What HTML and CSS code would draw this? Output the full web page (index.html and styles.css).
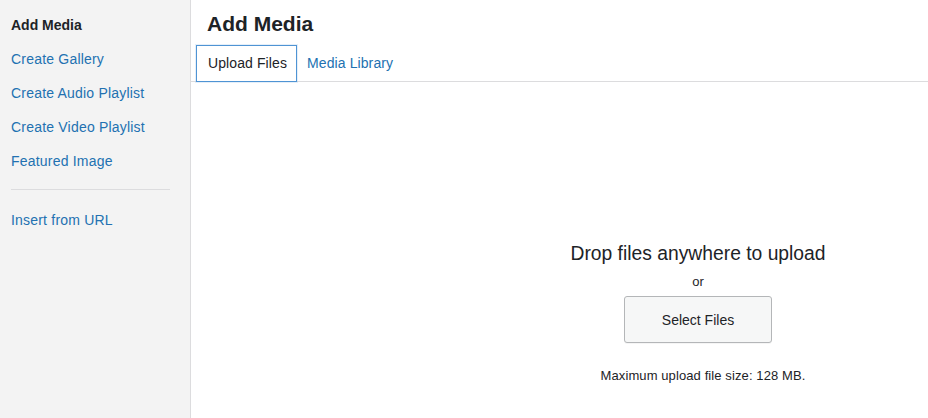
FILE: index.html
```html
<!DOCTYPE html>
<html>
<head>
<meta charset="utf-8">
<link rel="stylesheet" href="styles.css">
</head>
<body>
<div class="frame">
  <aside class="menu">
    <div class="menu-item active">Add Media</div>
    <a class="menu-item">Create Gallery</a>
    <a class="menu-item">Create Audio Playlist</a>
    <a class="menu-item">Create Video Playlist</a>
    <a class="menu-item">Featured Image</a>
    <div class="separator"></div>
    <a class="menu-item">Insert from URL</a>
  </aside>
  <main class="content">
    <h1 class="title">Add Media</h1>
    <nav class="router">
      <span class="tab active">Upload Files</span>
      <a class="tab">Media Library</a>
    </nav>
    <section class="uploader">
      <div class="upload-inner">
        <h2 class="upload-instructions">Drop files anywhere to upload</h2>
        <p class="or">or</p>
        <button class="select-btn">Select Files</button>
        <p class="max-size">Maximum upload file size: 128 MB.</p>
      </div>
    </section>
  </main>
</div>
</body>
</html>
```
FILE: styles.css
```css
html, body {
  margin: 0;
  padding: 0;
  background: #fff;
  overflow: hidden;
}
body {
  font-family: "Liberation Sans", Arial, sans-serif;
  color: #1d2327;
  width: 928px;
  height: 418px;
}
.frame {
  display: flex;
  height: 418px;
}
.menu {
  width: 190px;
  flex: none;
  background: #f3f3f3;
  border-right: 1px solid #dcdcde;
  padding-top: 15px;
  box-sizing: content-box;
  display: flex;
  flex-direction: column;
}
.menu-item {
  display: block;
  font-size: 14px;
  line-height: 20px;
  letter-spacing: 0.2px;
  padding: 0 11px;
  margin-bottom: 14px;
  color: #2271b1;
  text-decoration: none;
}
.menu-item.active {
  color: #1d2327;
  font-weight: bold;
  letter-spacing: 0;
}
.separator {
  height: 1px;
  background: #dcdcde;
  margin: 4px 20px 20px 11px;
}
.content {
  flex: none;
  width: 1014px;
  display: flex;
  flex-direction: column;
}
.title {
  margin: 0;
  font-size: 21px;
  line-height: 22px;
  font-weight: bold;
  padding: 13px 16px 11px 16px;
  color: #1d2327;
}
.router {
  display: flex;
  align-items: flex-end;
  padding-left: 5px;
  border-bottom: 1px solid #dcdcde;
  height: 35px;
}
.tab {
  font-size: 14px;
  line-height: 18px;
  letter-spacing: 0.1px;
  padding: 8px 10px 9px 9px;
  color: #2271b1;
  text-decoration: none;
  border: 1px solid transparent;
  border-bottom: 0;
}
.tab.active {
  color: #1d2327;
  border: 1px solid #4f94d4;
  box-shadow: 0 0 0 1px rgba(79,148,212,0.15);
  height: 18px;
  margin-bottom: -1px;
  padding: 8px 9px 9px 11px;
}
.uploader {
  display: flex;
  justify-content: center;
  padding-top: 159px;
}
.upload-inner {
  display: flex;
  flex-direction: column;
  align-items: center;
}
.upload-instructions {
  margin: 0;
  font-size: 19.3px;
  line-height: 26px;
  font-weight: normal;
  color: #1d2327;
}
.or {
  margin: 7px 0 6px 0;
  font-size: 13px;
  line-height: 16px;
}
.select-btn {
  width: 148px;
  height: 47px;
  font-family: inherit;
  font-size: 14px;
  color: #1d2327;
  background: #f6f7f7;
  border: 1px solid #b4b6b8;
  border-radius: 3px;
  box-shadow: 0 1px 0 rgba(0,0,0,0.04);
  cursor: pointer;
}
.max-size {
  margin: 26px 0 0 0;
  padding-left: 10px;
  font-size: 13px;
  line-height: 14px;
  letter-spacing: 0.1px;
}
```
